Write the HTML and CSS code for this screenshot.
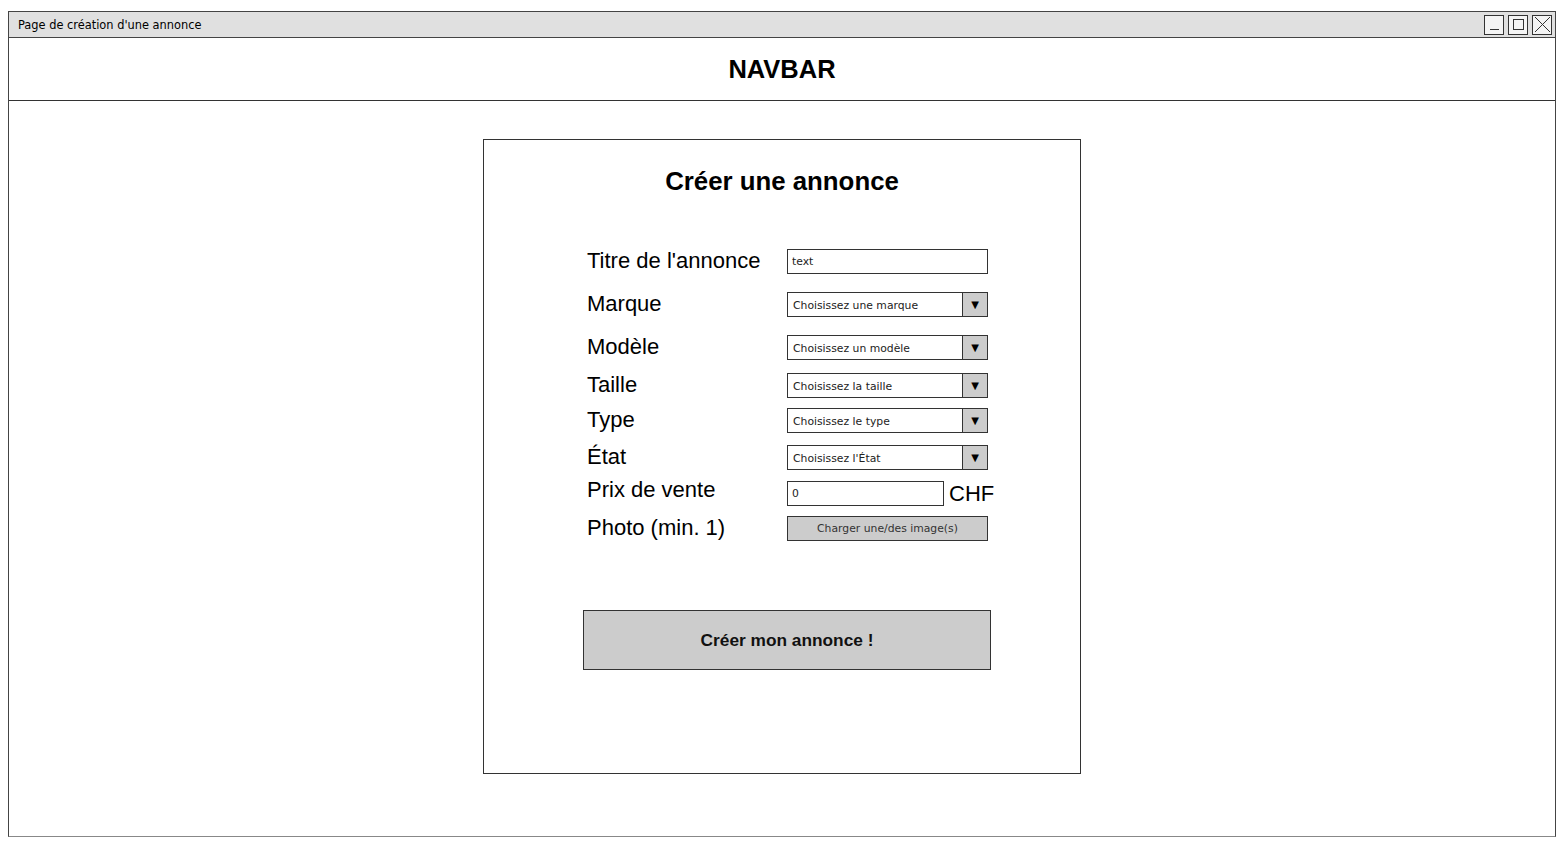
FILE: index.html
```html
<!DOCTYPE html>
<html lang="fr">
<head>
<meta charset="utf-8">
<title>Page de création d'une annonce</title>
<link rel="stylesheet" href="styles.css">
</head>
<body>
<div class="window">
  <div class="titlebar">
    <span class="wintitle">Page de création d'une annonce</span>
    <div class="winbtns">
      <span class="winbtn"><svg width="17" height="17" viewBox="0 0 17 17"><line x1="4" y1="13.5" x2="13" y2="13.5" stroke="#333" stroke-width="1"/></svg></span>
      <span class="winbtn"><svg width="17" height="17" viewBox="0 0 17 17"><rect x="3.5" y="3.5" width="10" height="10" fill="none" stroke="#333" stroke-width="1"/></svg></span>
      <span class="winbtn"><svg width="17" height="17" viewBox="0 0 17 17"><path d="M1 1 L16 16 M16 1 L1 16" stroke="#333" stroke-width="1"/></svg></span>
    </div>
  </div>
  <div class="navbar">NAVBAR</div>
  <main class="content">
    <section class="card">
      <h1 class="card-title">Créer une annonce</h1>
      <form class="form">
        <div class="row">
          <label class="label">Titre de l'annonce</label>
          <div class="field input">text</div>
        </div>
        <div class="row">
          <label class="label">Marque</label>
          <div class="field select"><span class="sel-text">Choisissez une marque</span><span class="arrow">▼</span></div>
        </div>
        <div class="row">
          <label class="label">Modèle</label>
          <div class="field select"><span class="sel-text">Choisissez un modèle</span><span class="arrow">▼</span></div>
        </div>
        <div class="row">
          <label class="label">Taille</label>
          <div class="field select"><span class="sel-text">Choisissez la taille</span><span class="arrow">▼</span></div>
        </div>
        <div class="row">
          <label class="label">Type</label>
          <div class="field select"><span class="sel-text">Choisissez le type</span><span class="arrow">▼</span></div>
        </div>
        <div class="row">
          <label class="label">État</label>
          <div class="field select"><span class="sel-text">Choisissez l'État</span><span class="arrow">▼</span></div>
        </div>
        <div class="row">
          <label class="label label-up">Prix de vente</label>
          <div class="price"><div class="field input price-input">0</div><span class="currency">CHF</span></div>
        </div>
        <div class="row">
          <label class="label">Photo (min. 1)</label>
          <div class="field upload">Charger une/des image(s)</div>
        </div>
        <div class="submit">Créer mon annonce !</div>
      </form>
    </section>
  </main>
</div>
</body>
</html>
```

FILE: styles.css
```css
* { box-sizing: border-box; }
html, body { margin: 0; padding: 0; background: #fff; }
body { font-family: "Liberation Sans", Arial, sans-serif; color: #000; }

.window {
  margin: 11px 9px 0 8px;
  height: 826px;
  border: 1px solid #444;
  border-bottom-color: #888;
  display: flex;
  flex-direction: column;
}

.titlebar {
  height: 26px;
  background: #e0e0e0;
  border-bottom: 1px solid #444;
  display: flex;
  align-items: center;
  justify-content: space-between;
  padding: 0 3px 0 9px;
}
.wintitle {
  font-family: "DejaVu Sans", sans-serif;
  font-size: 11.4px;
  color: #000;
  padding-top: 1px;
}
.winbtns { display: flex; gap: 4px; }
.winbtn {
  width: 20px;
  height: 20px;
  border: 1px solid #333;
  background: #f4f4f4;
  display: flex;
  align-items: center;
  justify-content: center;
}
.winbtn svg { display: block; }

.navbar {
  height: 63px;
  border-bottom: 1px solid #333;
  display: flex;
  align-items: center;
  justify-content: center;
  font-weight: bold;
  font-size: 25.5px;
}

.content { flex: 1; }

.card {
  width: 598px;
  height: 635px;
  margin: 38px auto 0;
  border: 1px solid #333;
  padding: 27px 0 0 0;
}
.card-title {
  margin: 0;
  height: 28px;
  line-height: 28px;
  font-size: 25.8px;
  font-weight: bold;
  text-align: center;
}

.form {
  margin-top: 54px;
  padding-left: 102px;
  display: flex;
  flex-direction: column;
}
.row {
  display: flex;
  align-items: center;
  height: 25px;
}
.row:nth-child(2), .row:nth-child(3) { margin-top: 18px; }
.row:nth-child(4) { margin-top: 13px; }
.row:nth-child(5) { margin-top: 10px; }
.row:nth-child(6) { margin-top: 12px; }
.row:nth-child(7) { margin-top: 11px; }
.row:nth-child(8) { margin-top: 10px; }

.label {
  width: 201px;
  font-size: 22px;
  padding-left: 1px;
  white-space: nowrap;
  position: relative;
  top: -1px;
}
.label-up { top: -4px; }

.field {
  height: 25px;
  width: 201px;
  border: 1px solid #333;
  background: #fff;
  font-family: "DejaVu Sans", sans-serif;
  font-size: 10.8px;
  color: #222;
  display: flex;
  align-items: center;
}
.input { padding-left: 4px; }
.select { padding-left: 5px; justify-content: space-between; }
.sel-text { flex: 1; padding-top: 2px; white-space: nowrap; overflow: hidden; }
.arrow {
  width: 25px;
  height: 100%;
  background: #ccc;
  border-left: 1px solid #333;
  display: flex;
  align-items: center;
  justify-content: center;
  font-size: 10px;
  color: #000;
}

.price { display: flex; align-items: center; }
.price-input { width: 157px; }
.currency { font-size: 22px; margin-left: 5px; }

.upload {
  background: #ccc;
  justify-content: center;
  color: #333;
}

.submit {
  margin-top: 69px;
  margin-left: -3px;
  width: 408px;
  height: 60px;
  background: #ccc;
  border: 1px solid #333;
  display: flex;
  align-items: center;
  justify-content: center;
  font-weight: bold;
  font-size: 17.3px;
  color: #111;
}
```
